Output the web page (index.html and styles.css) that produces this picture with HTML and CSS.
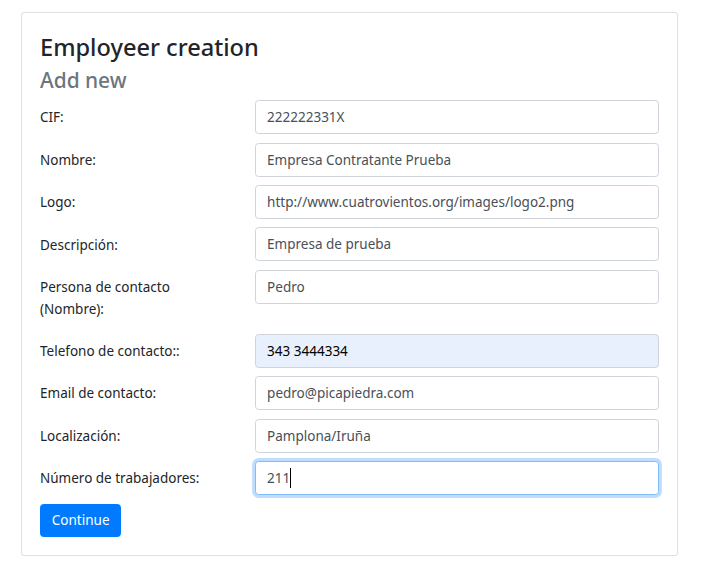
FILE: index.html
```html
<!DOCTYPE html>
<html lang="es">
<head>
<meta charset="utf-8">
<title>Employeer creation</title>
<link rel="stylesheet" href="styles.css">
</head>
<body>
<div class="page">
  <div class="card">
    <h3 class="card-title">Employeer creation</h3>
    <h4 class="card-subtitle">Add new</h4>
    <form class="form">
      <div class="form-row">
        <label class="form-label" for="cif">CIF:</label>
        <input class="form-control" id="cif" type="text" value="222222331X">
      </div>
      <div class="form-row">
        <label class="form-label" for="nombre">Nombre:</label>
        <input class="form-control" id="nombre" type="text" value="Empresa Contratante Prueba">
      </div>
      <div class="form-row">
        <label class="form-label" for="logo">Logo:</label>
        <input class="form-control" id="logo" type="text" value="http://www.cuatrovientos.org/images/logo2.png">
      </div>
      <div class="form-row">
        <label class="form-label" for="desc">Descripción:</label>
        <input class="form-control" id="desc" type="text" value="Empresa de prueba">
      </div>
      <div class="form-row">
        <label class="form-label" for="persona">Persona de contacto (Nombre):</label>
        <input class="form-control" id="persona" type="text" value="Pedro">
      </div>
      <div class="form-row">
        <label class="form-label" for="tel">Telefono de contacto::</label>
        <input class="form-control autofilled" id="tel" type="text" value="343 3444334">
      </div>
      <div class="form-row">
        <label class="form-label" for="email">Email de contacto:</label>
        <input class="form-control" id="email" type="text" value="pedro@picapiedra.com">
      </div>
      <div class="form-row">
        <label class="form-label" for="loc">Localización:</label>
        <input class="form-control" id="loc" type="text" value="Pamplona/Iruña">
      </div>
      <div class="form-row">
        <label class="form-label" for="num">Número de trabajadores:</label>
        <div class="field-wrap">
          <input class="form-control focused" id="num" type="text" value="211">
          <span class="caret" aria-hidden="true">211</span>
        </div>
      </div>
      <button class="btn" type="button">Continue</button>
    </form>
  </div>
</div>
</body>
</html>
```
FILE: styles.css
```css
* { box-sizing: border-box; }
html, body { margin: 0; padding: 0; background: #fff; }
body {
  font-family: "Noto Sans", "Open Sans", "Liberation Sans", sans-serif;
  font-size: 13.5px;
  line-height: 1.5;
  color: #212529;
}
.page {
  padding: 12px 24px 0 21px;
}
.card {
  border: 1px solid rgba(0,0,0,.125);
  border-radius: 3.6px;
  padding: 18px;
  background: #fff;
}
.card-title {
  margin: 1px 0 6px 0;
  font-size: 23.6px;
  line-height: 30.2px;
  font-weight: 500;
  color: #212529;
}
.card-subtitle {
  margin: 0 0 6.2px 0;
  font-size: 20.9px;
  line-height: 25.9px;
  font-weight: 500;
  color: #6c757d;
}
.form {
  display: flex;
  flex-direction: column;
  gap: 8px;
  align-items: flex-start;
}
.form-row {
  display: grid;
  grid-template-columns: 188.3px 1fr;
  column-gap: 27px;
  width: 100%;
  align-items: start;
}
.form-label {
  padding: 7.2px 0 5.6px 0;
  line-height: 21.6px;
}
.form-control {
  display: block;
  width: 100%;
  height: 34px;
  padding: 5.4px 10.8px;
  font-family: inherit;
  font-size: 13.5px;
  line-height: 21.6px;
  color: #495057;
  background: #fff;
  border: 1px solid #ced4da;
  border-radius: 3.6px;
  outline: none;
  margin: 0;
}
.form-control.autofilled {
  background: #e8f0fe;
  color: #000;
}
.form-control.focused {
  border-color: #80bdff;
  box-shadow: 0 0 0 2.9px rgba(0,123,255,.25);
}
.field-wrap {
  position: relative;
}
.caret {
  position: absolute;
  left: 11.8px;
  top: 7px;
  height: 20px;
  line-height: 20px;
  font-size: 13.5px;
  color: transparent;
  border-right: 1px solid #000;
  pointer-events: none;
}
.btn {
  margin-top: 0.5px;
  height: 33px;
  font-family: inherit;
  font-size: 13.5px;
  line-height: 21px;
  padding: 5px 10.8px;
  color: #fff;
  background: #007bff;
  border: 1px solid #007bff;
  border-radius: 3.6px;
  cursor: pointer;
}
```
